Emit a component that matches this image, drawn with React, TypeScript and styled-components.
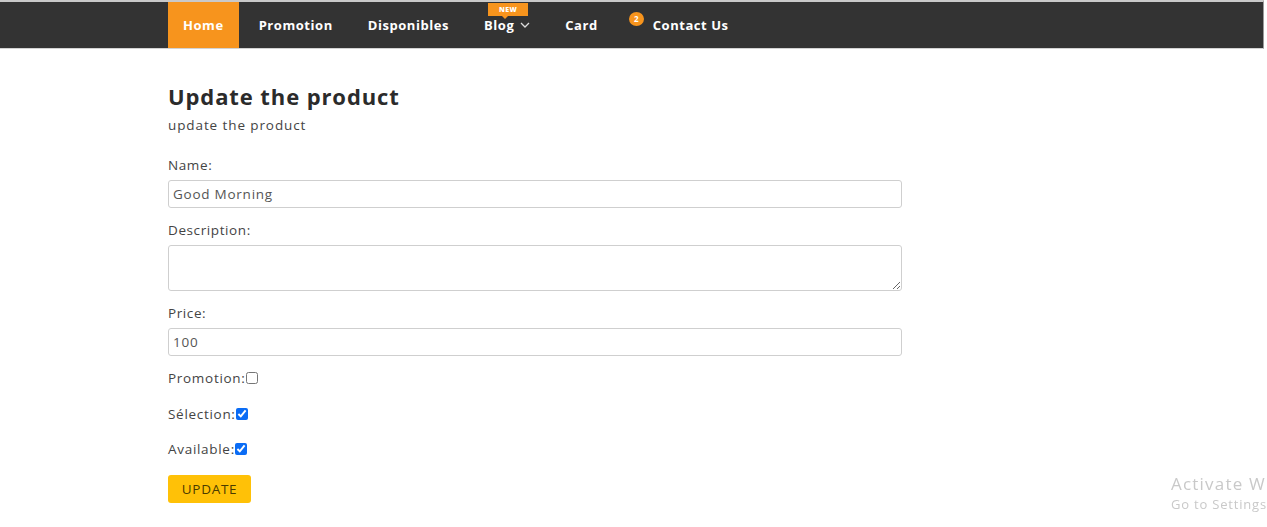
import React from "react";
import styled, { createGlobalStyle } from "styled-components";

const Global = createGlobalStyle`
  html, body { margin: 0; padding: 0; background: #fff; }
  body { font-family: "Open Sans", "Liberation Sans", Arial, sans-serif; color: #333; }
  * { box-sizing: border-box; }
`;

const NavBar = styled.nav`
  height: 49px;
  margin-right: 3px;
  background: #333333;
  border-top: 2px solid #c9c9c9;
  border-bottom: 1px solid #d2d2d2;
  border-right: 1px solid #9a9a9a;
  display: flex;
  padding-left: 168px;
`;

const NavItem = styled.a<{ $active?: boolean; $badge?: boolean }>`
  position: relative;
  display: flex;
  align-items: center;
  gap: 6px;
  height: 100%;
  padding: 0 15px;
  padding-left: ${(p) => (p.$badge ? "35px" : "15px")};
  margin-right: 5px;
  background: ${(p) => (p.$active ? "#f7941d" : "transparent")};
  color: #fff;
  font-weight: 700;
  font-size: 13px;
  text-decoration: none;
  letter-spacing: 0.55px;
`;

const NewTag = styled.span`
  position: absolute;
  top: 1px;
  left: 19px;
  width: 40px;
  height: 13px;
  background: #f7941d;
  color: #fff;
  font-size: 7px;
  font-weight: 800;
  line-height: 13px;
  text-align: center;
  letter-spacing: 0.4px;
  &::after {
    content: "";
    position: absolute;
    left: 14px;
    bottom: -3px;
    border-left: 3px solid transparent;
    border-right: 3px solid transparent;
    border-top: 3px solid #f7941d;
  }
`;

const CountBadge = styled.span`
  position: absolute;
  left: 11px;
  top: 10px;
  width: 15px;
  height: 14px;
  border-radius: 50%;
  background: #f7941d;
  color: #fff;
  font-size: 8px;
  font-weight: 700;
  line-height: 14px;
  text-align: center;
  letter-spacing: 0;
`;

const Main = styled.main`
  padding: 33px 0 0 168px;
  width: 902px;
`;

const Title = styled.h1`
  margin: 0;
  font-size: 22px;
  font-weight: 700;
  color: #2b2b2b;
  line-height: 28px;
  letter-spacing: 0.9px;
`;

const Subtitle = styled.p`
  margin: 5px 0 0;
  font-size: 13.5px;
  color: #444;
  line-height: 20px;
  letter-spacing: 0.9px;
`;

const Form = styled.form`
  display: flex;
  flex-direction: column;
  margin-top: 21px;
`;

const Label = styled.label`
  display: block;
  font-size: 13.5px;
  color: #444;
  line-height: 18px;
  margin-bottom: 6px;
  letter-spacing: 0.6px;
`;

const Field = styled.div`
  margin-bottom: 13px;
`;

const TextInput = styled.input`
  display: block;
  width: 100%;
  height: 28px;
  border: 1px solid #cfcfcf;
  border-radius: 3px;
  padding: 0 4px;
  font-family: inherit;
  font-size: 13.5px;
  letter-spacing: 0.75px;
  color: #555;
  outline: none;
`;

const TextArea = styled.textarea`
  display: block;
  width: 100%;
  height: 46px;
  border: 1px solid #cfcfcf;
  border-radius: 3px;
  padding: 4px;
  font-family: inherit;
  font-size: 13.5px;
  color: #555;
  resize: vertical;
  outline: none;
`;

const CheckRow = styled.label`
  display: flex;
  align-items: center;
  font-size: 13.5px;
  color: #444;
  line-height: 18px;
  height: 18px;
  margin-bottom: 17.5px;
  letter-spacing: 0.7px;
`;

const Check = styled.input`
  margin: 0;
  width: 12px;
  height: 12px;
  accent-color: #0a6cf5;
`;

const Button = styled.button`
  align-self: flex-start;
  margin-top: -1px;
  height: 28px;
  width: 83px;
  padding: 0;
  background: #ffc107;
  border: none;
  border-radius: 3px;
  color: #4a3b00;
  font-family: inherit;
  font-size: 13.5px;
  letter-spacing: 0.7px;
`;

const Watermark = styled.div`
  position: fixed;
  left: 1171px;
  top: 473px;
  right: 0;
  overflow: hidden;
  white-space: nowrap;
  color: #c9c9c9;
  font-family: "Open Sans", sans-serif;
`;

const WmTitle = styled.div`
  font-size: 17px;
  line-height: 22px;
  letter-spacing: 1.2px;
`;

const WmSub = styled.div`
  font-size: 13px;
  line-height: 18px;
  letter-spacing: 0.8px;
`;

function Chevron() {
  return (
    <svg width="10" height="6" viewBox="0 0 10 6" fill="none">
      <path d="M1 1l4 4 4-4" stroke="#ddd" strokeWidth="1.3" />
    </svg>
  );
}

export default function App() {
  return (
    <>
      <Global />
      <NavBar>
        <NavItem $active>Home</NavItem>
        <NavItem>Promotion</NavItem>
        <NavItem>Disponibles</NavItem>
        <NavItem>
          <NewTag>NEW</NewTag>
          Blog <Chevron />
        </NavItem>
        <NavItem>Card</NavItem>
        <NavItem $badge>
          <CountBadge>2</CountBadge>
          Contact Us
        </NavItem>
      </NavBar>
      <Main>
        <Title>Update the product</Title>
        <Subtitle>update the product</Subtitle>
        <Form onSubmit={(e) => e.preventDefault()}>
          <Field>
            <Label>Name:</Label>
            <TextInput defaultValue="Good Morning" />
          </Field>
          <Field>
            <Label>Description:</Label>
            <TextArea />
          </Field>
          <Field>
            <Label>Price:</Label>
            <TextInput defaultValue="100" />
          </Field>
          <CheckRow>
            Promotion:
            <Check type="checkbox" />
          </CheckRow>
          <CheckRow>
            Sélection:
            <Check type="checkbox" defaultChecked />
          </CheckRow>
          <CheckRow>
            Available:
            <Check type="checkbox" defaultChecked />
          </CheckRow>
          <Button type="submit">UPDATE</Button>
        </Form>
      </Main>
      <Watermark>
        <WmTitle>Activate Windows</WmTitle>
        <WmSub>Go to Settings to activate Windows.</WmSub>
      </Watermark>
    </>
  );
}
